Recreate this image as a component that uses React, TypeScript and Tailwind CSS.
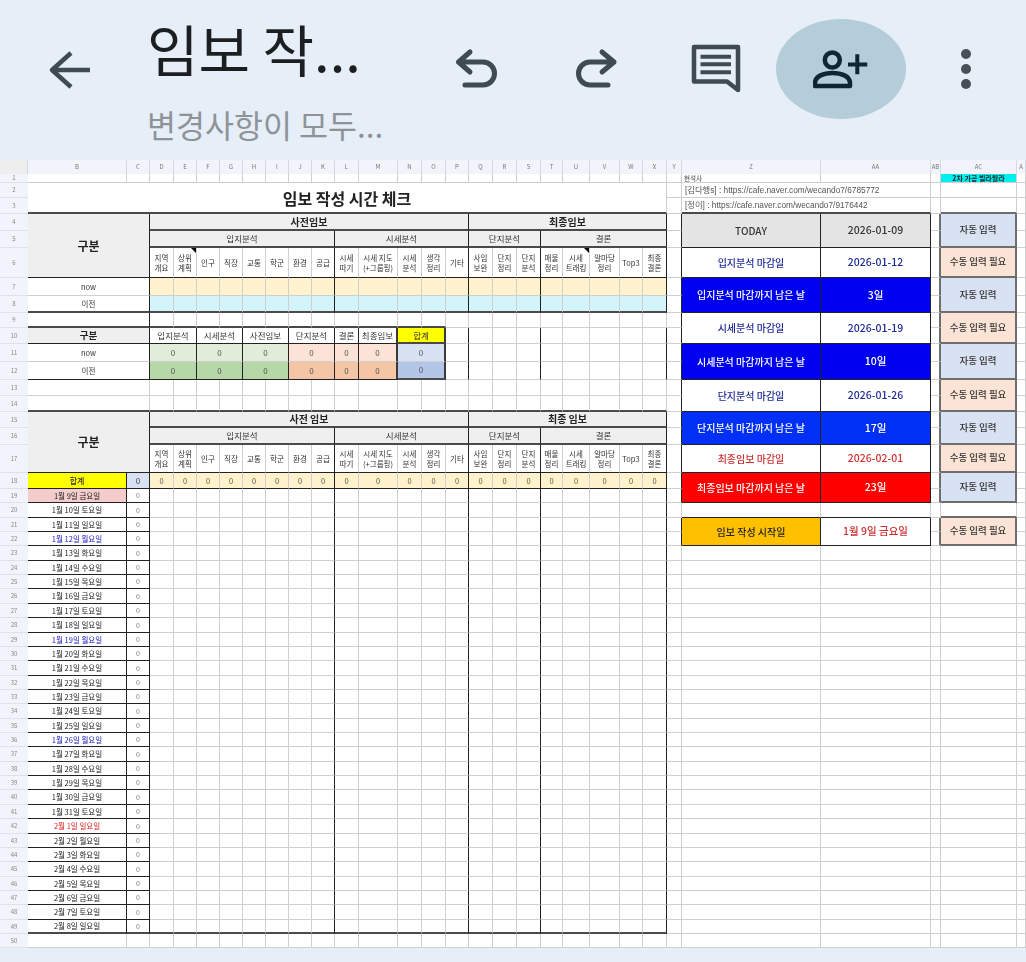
import { Fragment, type ReactNode } from "react";
import clsx from "clsx";

const colEdges = [0, 28, 127, 150, 174, 197, 220, 243, 266, 289, 312, 335, 359, 398, 422, 446, 469, 493, 517, 541, 563, 590, 620, 643, 667, 682, 821, 931, 941, 1017, 1026];
const colNames = ["", "B", "C", "D", "E", "F", "G", "H", "I", "J", "K", "L", "M", "N", "O", "P", "Q", "R", "S", "T", "U", "V", "W", "X", "Y", "Z", "AA", "AB", "AC", "A"];

// row bottoms for rows 1..18, then 19-49 are even up to 934, then row 50
const rowEdges = [174, 183, 198, 214, 231, 248, 278, 296, 313, 328, 344, 362, 380, 396, 412, 428, 445, 473, 489];
for (let i = 1; i <= 31; i++) rowEdges.push(Math.round(489 + (445 / 31) * i));
rowEdges.push(948);

// 0 grid line, 1 black, 2 thick, 3 thick gray
const RIGHT = ["border-r border-r-[#cfcfcf]", "border-r border-r-[#222222]", "border-r-2 border-r-[#3a3a3a]", "border-r-2 border-r-[#6e6e6e]"];
const BOTTOM = ["border-b border-b-[#cfcfcf]", "border-b border-b-[#222222]", "border-b-2 border-b-[#4a4a4a]", "border-b-2 border-b-[#6e6e6e]"];

type CellProps = {
  r?: number;
  b?: number;
  span?: number;
  rows?: number;
  className?: string;
  children?: ReactNode;
};

function Cell({ r = 0, b = 0, span = 1, rows = 1, className, children }: CellProps) {
  return (
    <td
      colSpan={span}
      rowSpan={rows}
      className={clsx("relative p-0 text-center align-middle leading-none whitespace-nowrap overflow-hidden", RIGHT[r], BOTTOM[b], className)}
    >
      {children}
    </td>
  );
}

const topLabels = [
  ["지역", "개요"], ["상위", "계획"], ["인구"], ["직장"], ["교통"], ["학군"], ["환경"], ["공급"],
  ["시세", "따기"], ["시세 지도", "(+그룹핑)"], ["시세", "분석"], ["생각", "정리"], ["기타"],
  ["사임", "보완"], ["단지", "정리"], ["단지", "분석"],
  ["매물", "정리"], ["시세", "트래킹"], ["알마당", "정리"], ["Top3"], ["최종", "결론"],
];

// index in D..X of the columns that close a group
const groupEnd = [7, 12, 15, 20];

function Band({
  bg,
  b = () => 0,
  edges = true,
  from = 0,
  zero,
}: {
  bg?: string;
  b?: (i: number) => number;
  edges?: boolean;
  from?: number;
  zero?: boolean;
}) {
  return (
    <>
      {topLabels.map((_, i) =>
        i < from ? null : (
          <Cell key={i} r={edges && groupEnd.includes(i) ? 1 : 0} b={b(i)} className={clsx(bg, "text-[7.5px] text-[#5a5a4a]")}>
            {zero ? "0" : null}
          </Cell>
        ),
      )}
    </>
  );
}

function HeadRow({ n, pre, fin }: { n: number; pre: string; fin: string }) {
  const sub = "bg-[#efefef] text-[8.5px] text-[#333]";
  const first = n === 4 || n === 15;
  const second = n === 5 || n === 16;
  if (first) {
    return (
      <>
        <Cell rows={3} span={2} r={1} b={1} className="bg-[#efefef] text-[12px] font-bold text-[#222]">구분</Cell>
        <Cell span={13} r={1} b={2} className="bg-[#efefef] text-[10px] font-bold text-[#222]">{pre}</Cell>
        <Cell span={8} r={1} b={2} className="bg-[#efefef] text-[10px] font-bold text-[#222]">{fin}</Cell>
      </>
    );
  }
  if (second) {
    return (
      <>
        <Cell span={8} r={1} b={2} className={sub}>입지분석</Cell>
        <Cell span={5} r={1} b={2} className={sub}>시세분석</Cell>
        <Cell span={3} r={1} b={2} className={sub}>단지분석</Cell>
        <Cell span={5} r={1} b={2} className={sub}>결론</Cell>
      </>
    );
  }
  return (
    <>
      {topLabels.map((l, i) => (
        <Cell key={i} r={groupEnd.includes(i) ? 1 : 0} b={1} className="text-[7.5px] text-[#333]">
          {(i === 1 || i === 17) && n === 6 ? (
            <span className="absolute top-0 right-0 h-0 w-0 border-t-[5px] border-l-[5px] border-t-black border-l-transparent" />
          ) : null}
          <div className="leading-[10px]">
            {l.map((t) => (
              <div key={t}>{t}</div>
            ))}
          </div>
        </Cell>
      ))}
    </>
  );
}

const summaryHead = [
  { span: 2, t: "입지분석" },
  { span: 2, t: "시세분석" },
  { span: 2, t: "사전임보" },
  { span: 2, t: "단지분석" },
  { span: 1, t: "결론" },
  { span: 1, t: "최종임보" },
];

function Summary({ light }: { light: boolean }) {
  const green = light ? "bg-[#e0edd9]" : "bg-[#b6d7a8]";
  const orange = light ? "bg-[#fbe4d5]" : "bg-[#f5c6a5]";
  const blue = light ? "bg-[#d9e2f3]" : "bg-[#b4c6e7]";
  return (
    <>
      <Cell span={2} r={1} b={light ? 0 : 1} className="bg-white text-[7.5px] text-[#333]">{light ? "now" : "이전"}</Cell>
      {summaryHead.map((c, i) => (
        <Cell
          key={c.t}
          span={c.span}
          r={i === 5 ? 2 : 1}
          b={light ? 0 : 1}
          className={clsx(i < 3 ? green : orange, "text-[8px] text-[#555]")}
        >
          0
        </Cell>
      ))}
      <Cell span={2} r={2} b={light ? 0 : 2} className={clsx(blue, "text-[8px] text-[#555]")}>0</Cell>
      <Band from={12} edges />
    </>
  );
}

const days = ["일", "월", "화", "수", "목", "금", "토"];

function DateRow({ n }: { n: number }) {
  const date = new Date(2026, 0, 9 + (n - 19));
  const wd = date.getDay();
  const label = `${date.getMonth() + 1}월 ${date.getDate()}일 ${days[wd]}요일`;
  const isDeadline = n === 42;
  const tone = isDeadline ? "text-[#e02020]" : wd === 1 && date.getMonth() === 0 ? "text-[#2020c0]" : "text-[#222]";
  const last = n === 49;
  return (
    <>
      <Cell r={1} b={last ? 2 : 1} className={clsx("text-[7.5px]", tone, n === 19 && "bg-[#f4cccc]")}>{label}</Cell>
      <Cell r={1} b={last ? 2 : 1} className="text-[7px] text-[#777]">0</Cell>
      <Band b={() => (last ? 2 : 0)} />
    </>
  );
}

function Left({ n }: { n: number }) {
  if (n === 1) {
    return (
      <>
        <Cell />
        <Cell />
        <Band edges={false} />
      </>
    );
  }
  if (n === 2) return <Cell span={23} rows={2} b={2} className="text-[16px] font-bold text-[#222]">임보 작성 시간 체크</Cell>;
  if (n === 3) return null;
  if (n === 4 || n === 5 || n === 6) return <HeadRow n={n} pre="사전임보" fin="최종임보" />;
  if (n === 15 || n === 16 || n === 17) return <HeadRow n={n} pre="사전 임보" fin="최종 임보" />;
  if (n === 7 || n === 8) {
    return (
      <>
        <Cell span={2} r={1} b={n === 8 ? 2 : 0} className="text-[7.5px] text-[#333]">{n === 7 ? "now" : "이전"}</Cell>
        <Band bg={n === 7 ? "bg-[#fff2cc]" : "bg-[#d3f4fb]"} b={() => (n === 8 ? 2 : 0)} />
      </>
    );
  }
  if (n === 9) {
    return (
      <>
        <Cell span={2} r={1} b={2} />
        <Band edges={false} b={(i) => (i < 12 ? 2 : 0)} />
      </>
    );
  }
  if (n === 10) {
    return (
      <>
        <Cell span={2} r={1} b={1} className="bg-[#efefef] text-[9.5px] font-semibold text-[#222]">구분</Cell>
        {summaryHead.map((c, i) => (
          <Cell key={c.t} span={c.span} r={i === 5 ? 2 : 1} b={1} className="text-[8.5px] text-[#333]">{c.t}</Cell>
        ))}
        <Cell span={2} r={2} b={2} className="bg-[#ffff00] text-[8.5px] text-[#333]">합계</Cell>
        <Band from={12} edges />
      </>
    );
  }
  if (n === 11 || n === 12) return <Summary light={n === 11} />;
  if (n === 13 || n === 14) {
    return (
      <>
        <Cell span={2} b={n === 14 ? 2 : 0} />
        <Band edges={false} b={() => (n === 14 ? 2 : 0)} />
      </>
    );
  }
  if (n === 18) {
    return (
      <>
        <Cell r={1} b={1} className="bg-[#ffff00] text-[8px] font-medium text-[#333]">합계</Cell>
        <Cell r={1} b={1} className="bg-[#d9e2f3] text-[8px] text-[#444]">0</Cell>
        <Band bg="bg-[#fff2cc]" b={() => 1} zero />
      </>
    );
  }
  if (n >= 19 && n <= 49) return <DateRow n={n} />;
  return (
    <>
      <Cell />
      <Cell />
      <Band edges={false} />
    </>
  );
}

const auto = "자동 입력";
const manual = "수동 입력 필요";
const blocks = [
  { from: 4, to: 5, z: "TODAY", aa: "2026-01-09", ac: auto, cell: "bg-[#e4e4e4] text-[#333]", dateCell: "bg-[#e4e4e4] text-[#333]" },
  { from: 6, to: 6, z: "입지분석 마감일", aa: "2026-01-12", ac: manual, cell: "bg-white text-[#1e2a96]", dateCell: "bg-white text-[#1e2a96]" },
  { from: 7, to: 8, z: "입지분석 마감까지 남은 날", aa: "3일", ac: auto, cell: "bg-[#0000f0] text-white", dateCell: "bg-[#0000f0] text-white" },
  { from: 9, to: 10, z: "시세분석 마감일", aa: "2026-01-19", ac: manual, cell: "bg-white text-[#1e2a96]", dateCell: "bg-white text-[#1e2a96]" },
  { from: 11, to: 12, z: "시세분석 마감까지 남은 날", aa: "10일", ac: auto, cell: "bg-[#0000f0] text-white", dateCell: "bg-[#0000f0] text-white" },
  { from: 13, to: 14, z: "단지분석 마감일", aa: "2026-01-26", ac: manual, cell: "bg-white text-[#1e2a96]", dateCell: "bg-white text-[#1e2a96]" },
  { from: 15, to: 16, z: "단지분석 마감까지 남은 날", aa: "17일", ac: auto, cell: "bg-[#0030f5] text-white", dateCell: "bg-[#0030f5] text-white" },
  { from: 17, to: 17, z: "최종임보 마감일", aa: "2026-02-01", ac: manual, cell: "bg-white text-[#d03030]", dateCell: "bg-white text-[#d03030]" },
  { from: 18, to: 19, z: "최종임보 마감까지 남은 날", aa: "23일", ac: auto, cell: "bg-[#fe0000] text-white", dateCell: "bg-[#fe0000] text-white" },
  { from: 21, to: 22, z: "임보 작성 시작일", aa: "1월 9일 금요일", ac: manual, cell: "bg-[#ffc000] text-[#222]", dateCell: "bg-white text-[#d03030]" },
];

function Right({ n }: { n: number }) {
  const block = blocks.find((x) => n >= x.from && n <= x.to);
  const inside = !!block;
  const head = block && block.from === n;
  const acTone = (t: string) => (t === auto ? "bg-[#d9e2f3]" : "bg-[#fbe4d5]");
  return (
    <>
      <Cell r={inside ? 1 : 0} />
      {n === 1 && (
        <>
          <Cell className="pl-[2px] text-left text-[6.5px] text-[#444]">현석사</Cell>
          <Cell />
        </>
      )}
      {(n === 2 || n === 3) && (
        <Cell span={2} b={n === 3 ? 2 : 0} className="pl-[3px] text-left font-['Liberation_Sans','Noto_Sans_CJK_KR',sans-serif] text-[8.300px] text-[#555]">
          {n === 2 ? "[김다행s] : https://cafe.naver.com/wecando7/6785772" : "[정이] : https://cafe.naver.com/wecando7/9176442"}
        </Cell>
      )}
      {head && (
        <>
          <Cell rows={block.to - block.from + 1} r={1} b={1} className={clsx(block.cell, "text-[10px] font-medium")}>{block.z}</Cell>
          <Cell rows={block.to - block.from + 1} r={1} b={1} className={clsx(block.dateCell, "text-[10.500px] font-medium")}>{block.aa}</Cell>
        </>
      )}
      {n === 20 && (
        <>
          <Cell b={1} />
          <Cell b={1} />
        </>
      )}
      {n >= 23 && (
        <>
          <Cell />
          <Cell />
        </>
      )}
      <Cell r={inside ? 3 : 0} />
      {n === 1 && <Cell className="bg-[#00f0f0] text-[7px] font-bold text-[#222]">2차 가공 빌라월라</Cell>}
      {n === 2 && <Cell />}
      {n === 3 && <Cell b={3} />}
      {head && (
        <Cell rows={block.to - block.from + 1} r={3} b={3} className={clsx(acTone(block.ac), "text-[9.500px] font-medium text-[#333]")}>{block.ac}</Cell>
      )}
      {n === 20 && <Cell b={3} />}
      {n >= 23 && <Cell />}
      <Cell />
    </>
  );
}

function Sheet() {
  const rowNums = Array.from({ length: 50 }, (_, i) => i + 1);
  return (
    <div className="blur-[0.4px]">
      <table className="w-[1026px] table-fixed border-separate border-spacing-0 bg-white font-['Noto_Sans_CJK_KR','Noto_Sans',sans-serif]">
        <colgroup>
          {colNames.map((c, i) => (
            <col key={i} style={{ width: colEdges[i + 1] - colEdges[i] }} />
          ))}
        </colgroup>
        <tbody>
          <tr style={{ height: 14 }}>
            {colNames.map((c, i) => (
              <td key={i} className={clsx("border-r border-r-[#d5d9e0] p-0 text-center align-middle text-[6px] leading-none text-[#777]", i === 0 ? "bg-[#eeeeee]" : "bg-[#f1f4fa]")}>
                {c}
              </td>
            ))}
          </tr>
          {rowNums.map((n) => (
            <tr key={n} style={{ height: rowEdges[n] - rowEdges[n - 1] }}>
              <td className="border-b border-b-[#dde1e8] bg-[#f1f4fa] p-0 text-center align-middle text-[6px] leading-none text-[#888]">{n}</td>
              <Fragment>
                <Left n={n} />
                <Right n={n} />
              </Fragment>
            </tr>
          ))}
        </tbody>
      </table>
    </div>
  );
}

function TopBar() {
  const ink = "#3f4a52";
  return (
    <div className="flex h-[160px] items-start bg-[#e6eef8]">
      <svg className="mt-[48px] ml-[48px] shrink-0" width="44" height="44" viewBox="0 0 44 44" fill="none" stroke={ink} strokeWidth="4.500" strokeLinejoin="round">
        <path d="M42 22H4M23 5 4 22l19 17" />
      </svg>
      <div className="ml-[55px] w-[307px] shrink-0 font-['Noto_Sans_CJK_KR',sans-serif] leading-none">
        <div className="mt-[16px] h-[72px] text-[56px] leading-[64px] font-normal whitespace-nowrap text-[#1c1f22]">임보 작...</div>
        <div className="mt-[14px] text-[31.500px] leading-[44px] font-normal whitespace-nowrap text-[#8e9398]">변경사항이 모두...</div>
      </div>
      <svg className="mt-[46px] shrink-0" width="46" height="46" viewBox="14 16 46 46" fill="none" stroke={ink} strokeWidth="5" strokeLinecap="round" strokeLinejoin="round">
        <path d="M30 22 18.500 32 30 42M18.500 32H43a11.500 11.500 0 0 1 0 23H25" />
      </svg>
      <svg className="mt-[46px] ml-[72px] shrink-0" width="46" height="46" viewBox="132 16 46 46" fill="none" stroke={ink} strokeWidth="5" strokeLinecap="round" strokeLinejoin="round">
        <path d="M162 22 174 32 162 42M174 32H150a11.500 11.500 0 0 0 0 23H168" />
      </svg>
      <svg className="mt-[43px] ml-[72px] shrink-0" width="52" height="52" viewBox="250 13 52 52" fill="none" stroke={ink} strokeWidth="4.500" strokeLinejoin="round">
        <path d="M254 17h44v43l-11-8.500h-33Z" />
        <path d="M260.500 26.700H291M260.500 34.300H291M260.500 42.300H291" strokeWidth="4" />
      </svg>
      <div className="mt-[19px] ml-[34px] flex h-[100px] w-[130px] shrink-0 items-center justify-center rounded-[50%] bg-[#b5ccd9]">
        <svg className="-mt-[4px]" width="56" height="44" viewBox="44 30 56 44" fill="none" stroke="#0f2733" strokeWidth="4.500">
          <circle cx="63.300" cy="45" r="7.500" />
          <path d="M46 71v-3c0-7 9-10 17.500-10S81 61 81 68v3Z" strokeLinejoin="round" />
          <path d="M79 49.500h19.300M88.300 39.300v20" strokeWidth="4" />
        </svg>
      </div>
      <div className="mt-[49px] ml-[55px] flex shrink-0 flex-col gap-[5px]">
        <div className="h-[10px] w-[10px] rounded-full bg-[#4a4f55]" />
        <div className="h-[10px] w-[10px] rounded-full bg-[#4a4f55]" />
        <div className="h-[10px] w-[10px] rounded-full bg-[#4a4f55]" />
      </div>
    </div>
  );
}

export default function App() {
  return (
    <div className="h-[962px] w-[1026px] overflow-hidden bg-[#e6eef8]">
      <TopBar />
      <Sheet />
    </div>
  );
}
